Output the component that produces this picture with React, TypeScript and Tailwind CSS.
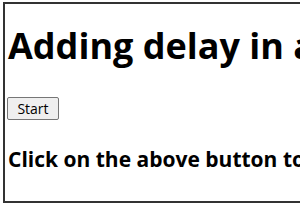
export default function App() {
  return (
    <div className="w-[300px] h-[210px] bg-white overflow-hidden">
      <div
        className="ml-[3px] mt-[2px] w-[320px] h-[201px] border-2 border-[#333] overflow-hidden text-black"
        style={{ fontFamily: '"Open Sans", "Noto Sans", sans-serif' }}
      >
        <h1 className="whitespace-nowrap text-[36px] font-bold leading-[44px] mt-[20px] ml-[3px]">
          Adding delay in a Loop
        </h1>
        <button className="block ml-[2px] mt-[29px] w-[52px] h-[23px] bg-[#efefef] border border-[#767676] rounded-[2px] text-[14px] leading-none text-black">
          Start
        </button>
        <h3 className="whitespace-nowrap text-[21px] font-bold mt-[25px] ml-[3px] leading-[28px]">
          Click on the above button to start
        </h3>
      </div>
    </div>
  );
}
